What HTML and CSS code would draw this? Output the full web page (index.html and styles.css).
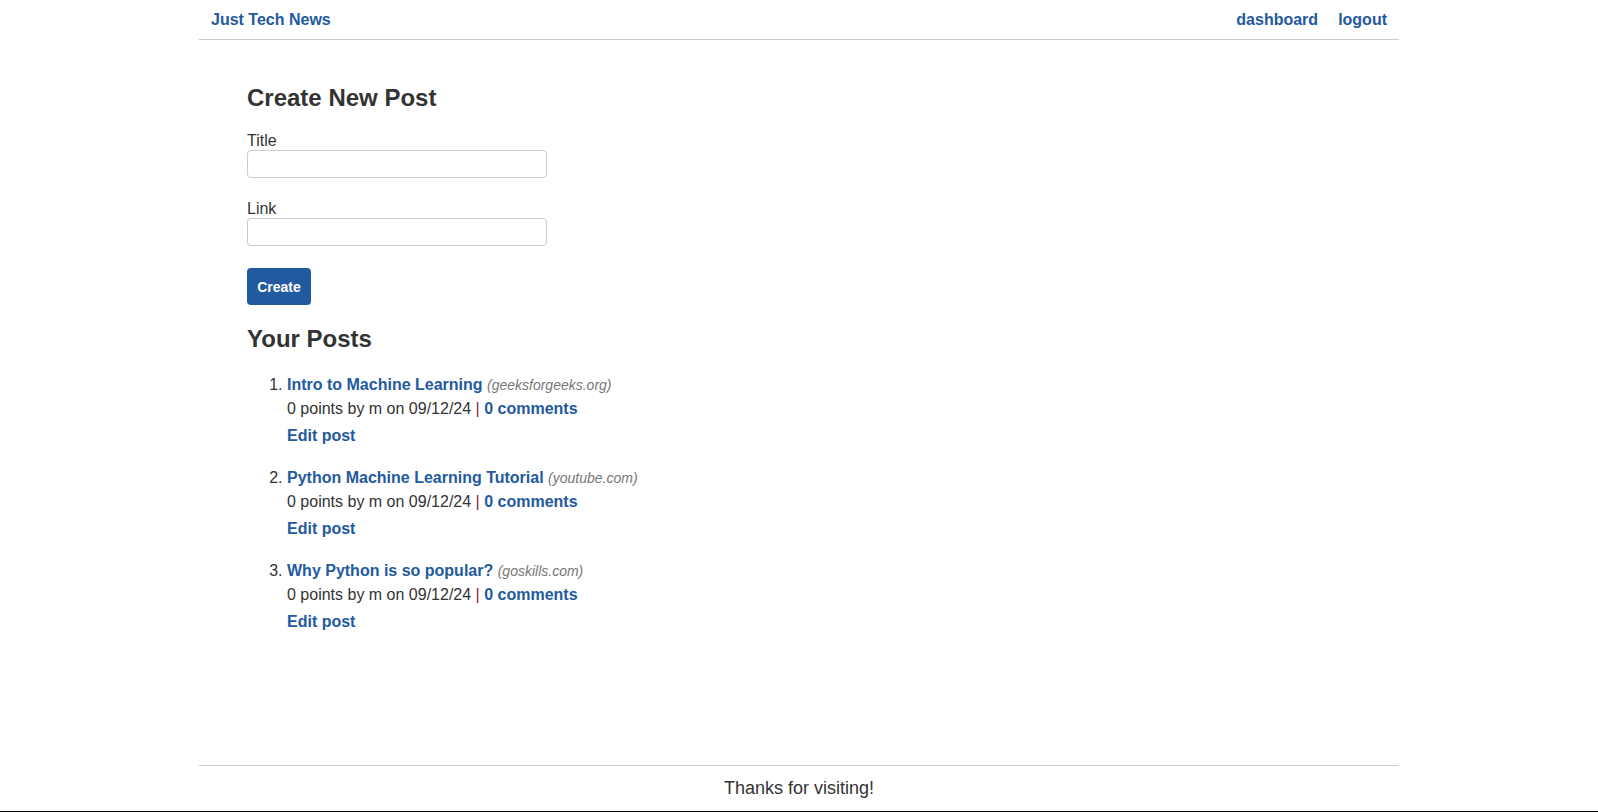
FILE: index.html
```html
<!DOCTYPE html>
<html lang="en">
<head>
<meta charset="utf-8">
<title>Just Tech News</title>
<link rel="stylesheet" href="styles.css">
</head>
<body>
<div class="page">
  <header class="site-header">
    <a class="logo" href="#">Just Tech News</a>
    <nav class="nav">
      <a href="#">dashboard</a>
      <a href="#">logout</a>
    </nav>
  </header>
  <main class="main">
    <section class="create">
      <h2 class="heading">Create New Post</h2>
      <form class="form">
        <div class="field">
          <label class="label" for="title">Title</label>
          <input class="input" id="title" type="text">
        </div>
        <div class="field">
          <label class="label" for="link">Link</label>
          <input class="input" id="link" type="text">
        </div>
        <button class="btn" type="button">Create</button>
      </form>
    </section>
    <section class="posts">
      <h2 class="heading">Your Posts</h2>
      <ol class="post-list">
        <li class="post">
          <div class="post-title"><a href="#">Intro to Machine Learning</a> <span class="domain">(geeksforgeeks.org)</span></div>
          <div class="meta">0 points by m on 09/12/24 <span class="sep">|</span> <a href="#">0 comments</a></div>
          <div class="edit"><a href="#">Edit post</a></div>
        </li>
        <li class="post">
          <div class="post-title"><a href="#">Python Machine Learning Tutorial</a> <span class="domain">(youtube.com)</span></div>
          <div class="meta">0 points by m on 09/12/24 <span class="sep">|</span> <a href="#">0 comments</a></div>
          <div class="edit"><a href="#">Edit post</a></div>
        </li>
        <li class="post">
          <div class="post-title"><a href="#">Why Python is so popular?</a> <span class="domain">(goskills.com)</span></div>
          <div class="meta">0 points by m on 09/12/24 <span class="sep">|</span> <a href="#">0 comments</a></div>
          <div class="edit"><a href="#">Edit post</a></div>
        </li>
      </ol>
    </section>
  </main>
  <footer class="site-footer">Thanks for visiting!</footer>
</div>
</body>
</html>
```

FILE: styles.css
```css
* { box-sizing: border-box; }
html, body { margin: 0; padding: 0; }
body {
  font-family: "Liberation Sans", Arial, sans-serif;
  color: #333;
  background: #fff;
  border-bottom: 1px solid #000;
  min-height: 100vh;
}
a { color: #235a9e; text-decoration: none; font-weight: bold; }

.page {
  width: 1200px;
  margin: 0 auto;
  min-height: calc(100vh - 1px);
  display: flex;
  flex-direction: column;
}

.site-header {
  display: flex;
  justify-content: space-between;
  align-items: flex-start;
  padding: 8px 12px 7px;
  border-bottom: 1px solid #ccc;
  font-size: 16px;
  line-height: 24px;
}
.logo { font-weight: bold; }
.nav { display: flex; gap: 20px; }

.main {
  flex: 1;
  padding: 44px 48px 0;
}
.heading {
  margin: 0;
  font-size: 24px;
  line-height: 28px;
  font-weight: bold;
  color: #333;
}
.form { margin-top: 19px; }
.field { margin-bottom: 21px; }
.field:last-of-type { margin-bottom: 22px; }
.label {
  display: block;
  font-size: 16px;
  line-height: 19px;
}
.input {
  display: block;
  width: 300px;
  height: 28px;
  border: 1px solid #ccc;
  border-radius: 4px;
  padding: 4px 8px;
  font: inherit;
}
.btn {
  display: block;
  width: 64px;
  height: 37px;
  background: #225a9f;
  color: #fff;
  border: none;
  border-radius: 4px;
  font-family: "Liberation Sans", Arial, sans-serif;
  font-size: 14px;
  font-weight: bold;
  padding: 0;
}
.posts { margin-top: 20px; }
.post-list {
  margin: 20px 0 0;
  padding-left: 40px;
  font-size: 16px;
  line-height: 24px;
}
.post { margin-bottom: 18px; }
.domain { font-style: italic; color: #777; font-size: 14px; }
.sep { color: #7d2a45; }
.edit { margin-top: 3px; }

.site-footer {
  height: 46px;
  border-top: 1px solid #ccc;
  text-align: center;
  font-size: 18px;
  line-height: 24px;
  padding-top: 10px;
}
```
